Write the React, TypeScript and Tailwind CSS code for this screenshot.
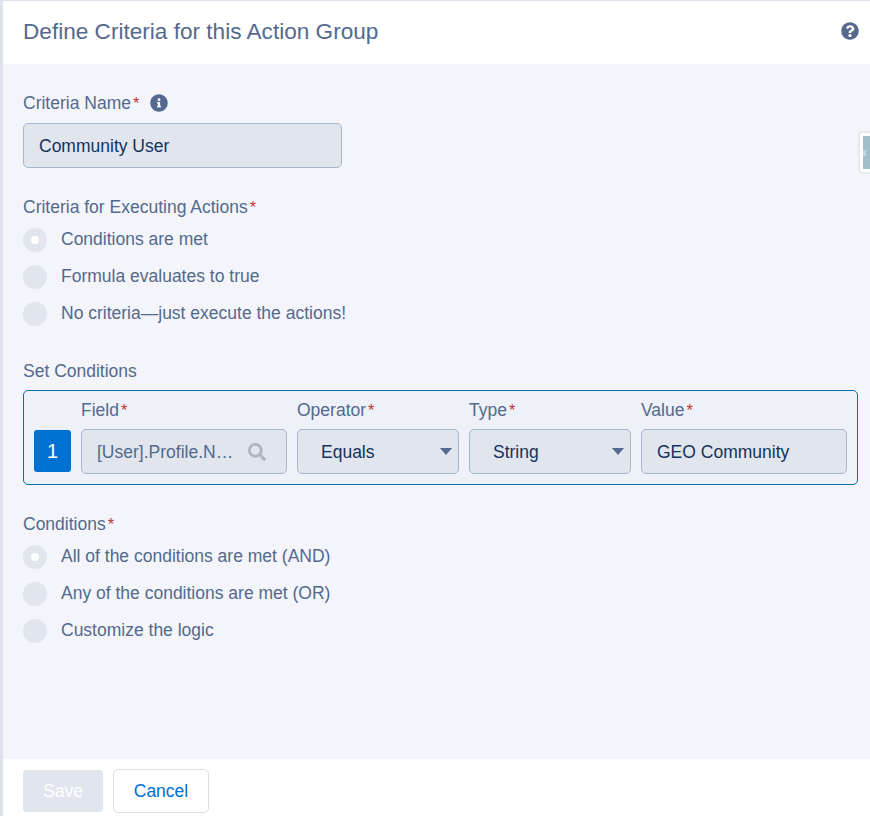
import { FaInfoCircle, FaQuestionCircle, FaSearch } from "react-icons/fa";

function Req() {
  return <span className="ml-[2px] text-[16.5px] text-[#c23934]">*</span>;
}

function Radio({ label, checked }: { label: string; checked?: boolean }) {
  return (
    <div className="flex h-[37px] items-center">
      <span className="flex h-6 w-6 items-center justify-center rounded-full bg-[#e0e5ee]">
        {checked && <span className="h-2 w-2 rounded-full bg-white" />}
      </span>
      <span className="ml-[14px]">{label}</span>
    </div>
  );
}

function Select({ value, width }: { value: string; width: string }) {
  return (
    <div className={`flex h-[45px] items-center justify-between rounded-[5px] border border-[#a8b7cc] bg-[#e0e5ee] pl-[23px] pr-[6px] text-[#16325c] ${width}`}>
      <span className="pt-[1px]">{value}</span>
      <span className="h-0 w-0 border-x-[6px] border-t-[7px] border-x-transparent border-t-[#54698d]" />
    </div>
  );
}

export default function App() {
  return (
    <div className="relative flex h-[816px] w-[870px] flex-col overflow-hidden border-l-[3px] border-t border-[#dde3ec] bg-[#f3f5fa] font-['Liberation_Sans',sans-serif] text-[17.5px] text-[#54698d]">
      {/* Header */}
      <header className="flex h-[63px] shrink-0 items-center justify-between bg-white pb-[2px] pl-5 pr-[11px]">
        <h1 className="text-[22.6px] font-normal">Define Criteria for this Action Group</h1>
        <FaQuestionCircle className="-mt-[1px] h-[18px] w-[18px] text-[#54698d]" />
      </header>

      {/* Body */}
      <main className="relative flex-1 pl-5 pr-[12px] pt-[28px]">
        <div className="flex h-[22px] items-center">
          <span>Criteria Name<Req /></span>
          <FaInfoCircle className="ml-[11px] h-[18px] w-[18px]" />
        </div>
        <div className="mt-[9px] flex h-[45px] w-[319px] items-center rounded-[5px] border border-[#a8b7cc] bg-[#e0e5ee] pl-[15px] pt-[1px] text-[#16325c]">
          Community User
        </div>

        <div className="mt-[28px] leading-[22px]">Criteria for Executing Actions<Req /></div>
        <div className="mt-[3px]">
          <Radio label="Conditions are met" checked />
          <Radio label="Formula evaluates to true" />
          <Radio label="No criteria—just execute the actions!" />
        </div>

        <div className="mt-[28px] leading-[22px]">Set Conditions</div>
        <div className="mt-[8px] flex h-[95px] items-end gap-[10px] rounded-[5px] border border-[#0070a8] bg-[#eef1f7] pb-[10px] pl-[10px] pr-[10px]">
          <div className="mb-[2px] flex h-[42px] w-[37px] items-center justify-center rounded-[3px] bg-[#0070d2] text-[20px] text-white">1</div>
          <div className="w-[206px]">
            <div className="mb-[8px] leading-[22px]">Field<Req /></div>
            <div className="flex h-[45px] items-center justify-between rounded-[5px] border border-[#a8b7cc] bg-[#e0e5ee] pl-[15px] pr-[20px]">
              <span className="pt-[1px]">[User].Profile.N…</span>
              <FaSearch className="h-[18px] w-[18px] text-[#b0b6be]" />
            </div>
          </div>
          <div>
            <div className="mb-[8px] leading-[22px]">Operator<Req /></div>
            <Select value="Equals" width="w-[162px]" />
          </div>
          <div>
            <div className="mb-[8px] leading-[22px]">Type<Req /></div>
            <Select value="String" width="w-[162px]" />
          </div>
          <div>
            <div className="mb-[8px] leading-[22px]">Value<Req /></div>
            <div className="flex h-[45px] w-[206px] items-center rounded-[5px] border border-[#a8b7cc] bg-[#e0e5ee] pl-[15px] pt-[1px] text-[#16325c]">
              GEO Community
            </div>
          </div>
        </div>

        <div className="mt-[28px] leading-[22px]">Conditions<Req /></div>
        <div className="mt-[3px]">
          <Radio label="All of the conditions are met (AND)" checked />
          <Radio label="Any of the conditions are met (OR)" />
          <Radio label="Customize the logic" />
        </div>

        {/* Collapsed side tab */}
        <div className="absolute right-0 top-[67px] h-[43px] w-[12px] rounded-l-[5px] border-y-2 border-l-2 border-[#e6e8ee] bg-white pl-[3px] pt-[3px]">
          <div className="flex h-[33px] w-full items-center bg-[#a0c0cc]">
            <span className="h-[6px] w-[3px] bg-[#c3d6dd]" />
          </div>
        </div>
      </main>

      {/* Footer */}
      <footer className="flex h-[57px] shrink-0 items-center gap-[10px] bg-white pl-5">
        <button type="button" className="mt-[7px] h-[42px] w-[80px] rounded-[4px] bg-[#e0e5ee] text-white">Save</button>
        <button type="button" className="mt-[7px] h-[44px] w-[96px] rounded-[5px] border border-[#d8dde6] bg-white text-[#0070d2]">Cancel</button>
      </footer>

      {/* Tick on the left edge */}
      <span className="absolute -left-[3px] top-[291px] h-[3px] w-[2px] bg-[#b4c0d0]" />
    </div>
  );
}
